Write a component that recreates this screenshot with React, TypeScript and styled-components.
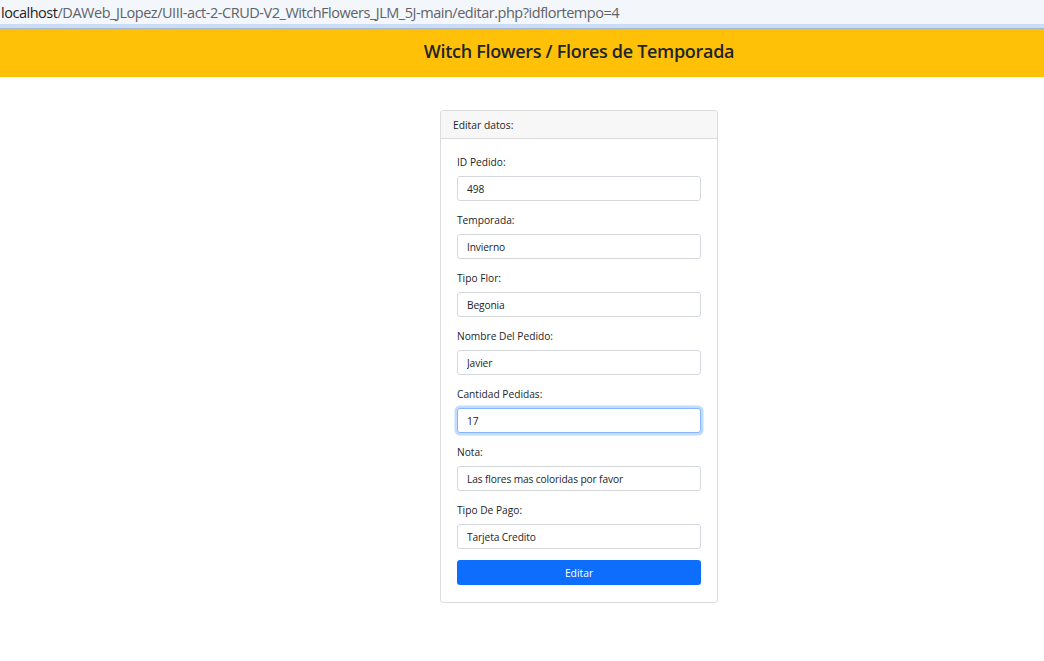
import React from 'react';
import styled, { createGlobalStyle } from 'styled-components';

const GlobalStyle = createGlobalStyle`
  html, body {
    margin: 0;
    padding: 0;
    background: #ffffff;
    overflow: hidden;
  }
  body {
    font-family: 'Open Sans', 'Noto Sans', 'Liberation Sans', sans-serif;
    color: #212529;
  }
`;

// the shot is cropped: page content is centred on x=579, not the window middle
const CENTER_SHIFT = '114px';

const AddressBar = styled.div`
  height: 24px;
  background: #f3f6fb;
  display: flex;
  align-items: center;
  padding-left: 1px;
  font-size: 14.5px;
  letter-spacing: -0.47px;
  white-space: nowrap;
  overflow: hidden;
  color: #5f6368;
  border-bottom: 4px solid #cbdcf6;
`;

const Host = styled.span`
  color: #1f1f1f;
`;

const Page = styled.div`
  border-top: 1px solid #a9b7cb;
`;

const Banner = styled.header`
  height: 48px;
  box-sizing: border-box;
  padding: 0 0 4px ${CENTER_SHIFT};
  background: #ffc107;
  display: flex;
  align-items: center;
  justify-content: center;
`;

const Title = styled.h1`
  margin: 0;
  font-size: 18px;
  font-weight: 600;
  letter-spacing: -0.3px;
  color: #212529;
`;

const Main = styled.main`
  display: flex;
  justify-content: center;
  padding: 33px 0 0 ${CENTER_SHIFT};
`;

const Card = styled.section`
  width: 278px;
  box-sizing: border-box;
  border: 1px solid #dcdcdc;
  border-radius: 3px;
  overflow: hidden;
`;

const CardHeader = styled.div`
  height: 28px;
  box-sizing: border-box;
  background: #f7f7f7;
  border-bottom: 1px solid #dcdcdc;
  padding: 0 12px;
  display: flex;
  align-items: center;
  font-size: 10.3px;
`;

const CardBody = styled.form`
  padding: 15px 16px 17px 16px;
  display: flex;
  flex-direction: column;
`;

const Field = styled.div`
  display: flex;
  flex-direction: column;
  margin-bottom: 11px;
`;

const Label = styled.label`
  font-size: 10.2px;
  line-height: 16px;
  margin-bottom: 6px;
`;

const Input = styled.input<{ $focused?: boolean }>`
  height: 25px;
  box-sizing: border-box;
  border: 1px solid ${(p) => (p.$focused ? '#86b7fe' : '#d4d8dd')};
  border-radius: 3px;
  padding: 0 9px;
  font-family: inherit;
  font-size: 10.2px;
  letter-spacing: -0.12px;
  color: #212529;
  outline: none;
  box-shadow: ${(p) => (p.$focused ? '0 0 0 2.5px rgba(13, 110, 253, 0.25)' : 'none')};
`;

const Button = styled.button`
  height: 25px;
  border: none;
  border-radius: 3px;
  background: #0d6efd;
  color: #ffffff;
  font-family: inherit;
  font-size: 10.3px;
`;

const fields = [
  { label: 'ID Pedido:', value: '498' },
  { label: 'Temporada:', value: 'Invierno' },
  { label: 'Tipo Flor:', value: 'Begonia' },
  { label: 'Nombre Del Pedido:', value: 'Javier' },
  { label: 'Cantidad Pedidas:', value: '17', focused: true },
  { label: 'Nota:', value: 'Las flores mas coloridas por favor' },
  { label: 'Tipo De Pago:', value: 'Tarjeta Credito' },
];

const App = () => {
  return (
    <>
      <GlobalStyle />
      <AddressBar>
        <Host>localhost</Host>/DAWeb_JLopez/UIII-act-2-CRUD-V2_WitchFlowers_JLM_5J-main/editar.php?idflortempo=4
      </AddressBar>
      <Page>
        <Banner>
          <Title>Witch Flowers / Flores de Temporada</Title>
        </Banner>
        <Main>
          <Card>
            <CardHeader>Editar datos:</CardHeader>
            <CardBody onSubmit={(e) => e.preventDefault()}>
              {fields.map((f) => (
                <Field key={f.label}>
                  <Label>{f.label}</Label>
                  <Input defaultValue={f.value} $focused={f.focused} />
                </Field>
              ))}
              <Button type='submit'>Editar</Button>
            </CardBody>
          </Card>
        </Main>
      </Page>
    </>
  );
};

export default App;
